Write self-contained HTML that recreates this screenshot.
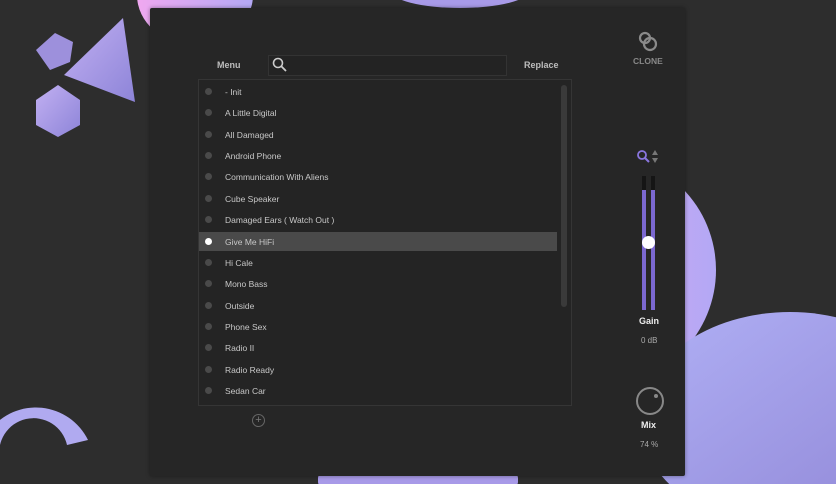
<!DOCTYPE html>
<html style="overflow:hidden"><head><style>
html,body{margin:0;width:836px;height:484px;overflow:hidden}
body{background:#2d2d2d;position:relative;font-family:"Liberation Sans",sans-serif}
.abs{position:absolute}
.panel{left:150px;top:8px;width:535px;height:468px;background:#262626;border-radius:2px;box-shadow:0 0 4px rgba(0,0,0,.4)}
.t{color:#bdbdbd;font-size:9px;font-weight:bold}
.row{position:absolute;left:199px;width:358px;height:20px;font-size:8.5px;color:#c8c8c8}
.row span{position:absolute;left:26px;top:5px}
.row i{position:absolute;left:6px;top:6px;width:7px;height:7px;border-radius:50%;background:#4a4a4a}
</style></head><body>
<svg class="abs" style="left:0;top:0;overflow:hidden" width="836" height="484">
<defs>
<linearGradient id="g1" x1="0" y1="0" x2="1" y2="1"><stop offset="0" stop-color="#c2b0f2"/><stop offset="1" stop-color="#8d84d8"/></linearGradient>
<linearGradient id="g2" x1="0" y1="0" x2="1" y2="0"><stop offset="0" stop-color="#f0a8f0"/><stop offset="1" stop-color="#b3a8f5"/></linearGradient>
<linearGradient id="g3" x1="0" y1="0" x2="1" y2="1"><stop offset="0" stop-color="#b0b0f5"/><stop offset="1" stop-color="#8f85d5"/></linearGradient>
</defs>
<ellipse cx="195" cy="-5" rx="58" ry="50" fill="url(#g2)"/>
<ellipse cx="460" cy="-10" rx="70" ry="18" fill="#a89ae8"/>
<polygon points="36,50 55,33 73,42 70,62 50,70" fill="#9d90dc"/>
<polygon points="64,75 123,18 135,102" fill="url(#g1)"/>
<polygon points="58,85 80,100 80,125 58,137 36,125 36,100" fill="url(#g1)"/>
<path d="M0 460 A34 34 0 0 1 67 445 L88 440 A58 58 0 0 0 -10 430 Z" fill="#b0aaf0"/>
<circle cx="600" cy="270" r="116" fill="url(#g2)"/>
<ellipse cx="790" cy="420" rx="150" ry="108" fill="url(#g3)"/>
<rect x="318" y="474" width="200" height="12" rx="4" fill="#a89ae8"/>
</svg>
<div class="abs panel"></div>
<div class="abs t" style="left:217px;top:60px">Menu</div>
<div class="abs t" style="left:524px;top:60px">Replace</div>
<div class="abs" style="left:268px;top:55px;width:237px;height:19px;border:1px solid #333;background:#232323"></div>
<svg class="abs" style="left:272px;top:57px" width="16" height="16"><circle cx="6" cy="6" r="4.5" fill="none" stroke="#ccc" stroke-width="1.6"/><line x1="9.3" y1="9.3" x2="14" y2="14" stroke="#ccc" stroke-width="1.8"/></svg>
<div class="abs" style="left:198px;top:79px;width:372px;height:325px;border:1px solid #353535;background:#242424"></div>
<div class="abs" style="left:561px;top:85px;width:6px;height:222px;border-radius:3px;background:#3a3a3a"></div>
<div class="abs" style="left:199px;top:232px;width:358px;height:19px;background:#4a4a4a"></div>
<div class="row" style="top:82px"><i></i><span>- Init</span></div>
<div class="row" style="top:103px"><i></i><span>A Little Digital</span></div>
<div class="row" style="top:125px"><i></i><span>All Damaged</span></div>
<div class="row" style="top:146px"><i></i><span>Android Phone</span></div>
<div class="row" style="top:167px"><i></i><span>Communication With Aliens</span></div>
<div class="row" style="top:189px"><i></i><span>Cube Speaker</span></div>
<div class="row" style="top:210px"><i></i><span>Damaged Ears ( Watch Out )</span></div>
<div class="row" style="top:232px"><i style="background:#fff"></i><span>Give Me HiFi</span></div>
<div class="row" style="top:253px"><i></i><span>Hi Cale</span></div>
<div class="row" style="top:274px"><i></i><span>Mono Bass</span></div>
<div class="row" style="top:296px"><i></i><span>Outside</span></div>
<div class="row" style="top:317px"><i></i><span>Phone Sex</span></div>
<div class="row" style="top:338px"><i></i><span>Radio II</span></div>
<div class="row" style="top:360px"><i></i><span>Radio Ready</span></div>
<div class="row" style="top:381px"><i></i><span>Sedan Car</span></div>
<div class="abs" style="left:252px;top:414px;width:11px;height:11px;border:1px solid #666;border-radius:50%;color:#777;font-size:11px;line-height:11px;text-align:center">+</div>
<svg class="abs" style="left:637px;top:30px" width="24" height="24"><circle cx="8" cy="8" r="5" fill="none" stroke="#8a8a8a" stroke-width="2.2"/><circle cx="13" cy="14" r="6" fill="none" stroke="#8a8a8a" stroke-width="2.2"/></svg>
<div class="abs t" style="left:633px;top:56px;color:#888;font-size:8.5px">CLONE</div>
<svg class="abs" style="left:636px;top:149px" width="26" height="16"><circle cx="6" cy="6" r="4" fill="none" stroke="#8a76e0" stroke-width="1.8"/><line x1="9" y1="9" x2="13" y2="13" stroke="#8a76e0" stroke-width="2"/><polygon points="16,6 22,6 19,1" fill="#777"/><polygon points="16,9 22,9 19,14" fill="#777"/></svg>
<div class="abs" style="left:642px;top:176px;width:4px;height:134px;background:#7b68d0;border-top:14px solid #151515;box-sizing:border-box"></div>
<div class="abs" style="left:651px;top:176px;width:4px;height:134px;background:#7b68d0;border-top:14px solid #151515;box-sizing:border-box"></div>
<div class="abs" style="left:642px;top:236px;width:13px;height:13px;border-radius:50%;background:#fff"></div>
<div class="abs t" style="left:639px;top:316px;color:#eee">Gain</div>
<div class="abs" style="left:641px;top:336px;color:#aaa;font-size:8px">0 dB</div>
<div class="abs" style="left:636px;top:387px;width:24px;height:24px;border:2px solid #888;border-radius:50%"></div>
<div class="abs" style="left:654px;top:394px;width:4px;height:4px;border-radius:50%;background:#888"></div>
<div class="abs t" style="left:641px;top:420px;color:#eee">Mix</div>
<div class="abs" style="left:640px;top:440px;color:#aaa;font-size:8px">74 %</div>
</body></html>
